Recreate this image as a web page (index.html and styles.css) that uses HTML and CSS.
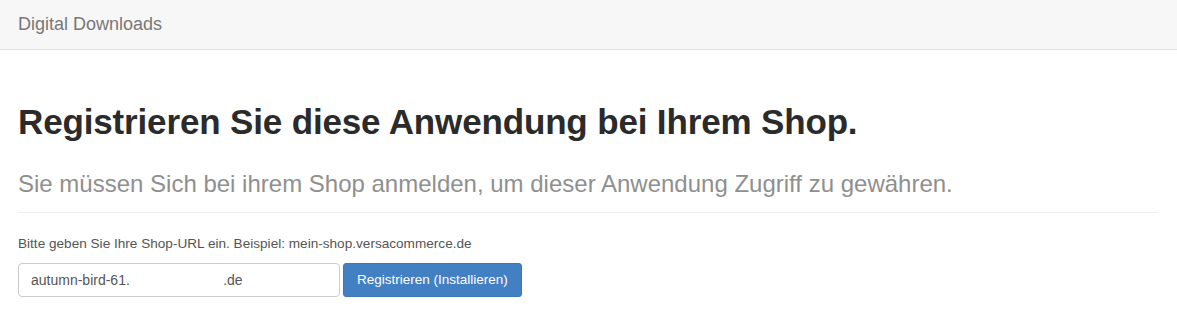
FILE: index.html
```html
<!DOCTYPE html>
<html lang="de">
<head>
    <meta charset="UTF-8">
    <meta name="viewport" content="width=device-width, initial-scale=1.0">
    <title>Digital Downloads</title>
    <link rel="stylesheet" href="styles.css">
</head>
<body>
    <nav class="navbar">
        <a class="navbar-brand" href="#">Digital Downloads</a>
    </nav>

    <div class="container">
        <div class="page-header">
            <h1>Registrieren Sie diese Anwendung bei Ihrem Shop.</h1>
            <p class="lead">Sie müssen Sich bei ihrem Shop anmelden, um dieser Anwendung Zugriff zu gewähren.</p>
        </div>

        <form class="register-form" onsubmit="return false;">
            <label for="shopUrl">Bitte geben Sie Ihre Shop-URL ein. Beispiel: mein-shop.versacommerce.de</label>
            <div class="form-row">
                <input type="text" id="shopUrl" class="form-control" value="autumn-bird-61.                        .de">
                <button type="submit" class="btn btn-primary">Registrieren (Installieren)</button>
            </div>
        </form>
    </div>
</body>
</html>
```

FILE: styles.css
```css
body {
    font-family: "Liberation Sans", Arial, sans-serif;
    font-size: 14px;
    color: #333;
    margin: 0;
    padding: 0;
    background-color: #fff;
}

.navbar {
    height: 49px;
    background-color: #f7f7f7;
    border-bottom: 1px solid #e3e3e3;
    display: flex;
    align-items: center;
    padding: 0 18px;
}

.navbar-brand {
    font-size: 18px;
    color: #777;
    text-decoration: none;
}

.container {
    padding: 0 19px 0 18px;
}

.page-header {
    padding-top: 53px;
    padding-bottom: 15px;
    border-bottom: 1px solid #eee;
    margin-bottom: 23px;
}

h1 {
    font-size: 35px;
    font-weight: bold;
    letter-spacing: -0.15px;
    margin: 0;
    line-height: 1.1;
    color: #2b2b2b;
}

.lead {
    font-size: 24px;
    color: #8f8f8f;
    margin: 29px 0 0;
    line-height: 1.1;
}

.register-form label {
    display: block;
    font-size: 13.6px;
    color: #555;
    margin-bottom: 12px;
}

.form-row {
    display: flex;
    gap: 3px;
}

.form-control {
    width: 322px;
    height: 34px;
    box-sizing: border-box;
    padding: 6px 12px;
    font-family: inherit;
    font-size: 14px;
    color: #555;
    border: 1px solid #ccc;
    border-radius: 4px;
    white-space: pre;
}

.btn {
    height: 34px;
    padding: 6px 13px;
    font-family: inherit;
    font-size: 13.5px;
    border: 1px solid #3d77b4;
    border-radius: 3px;
    cursor: pointer;
}

.btn-primary {
    background-color: #4380c3;
    color: #fff;
}
```
